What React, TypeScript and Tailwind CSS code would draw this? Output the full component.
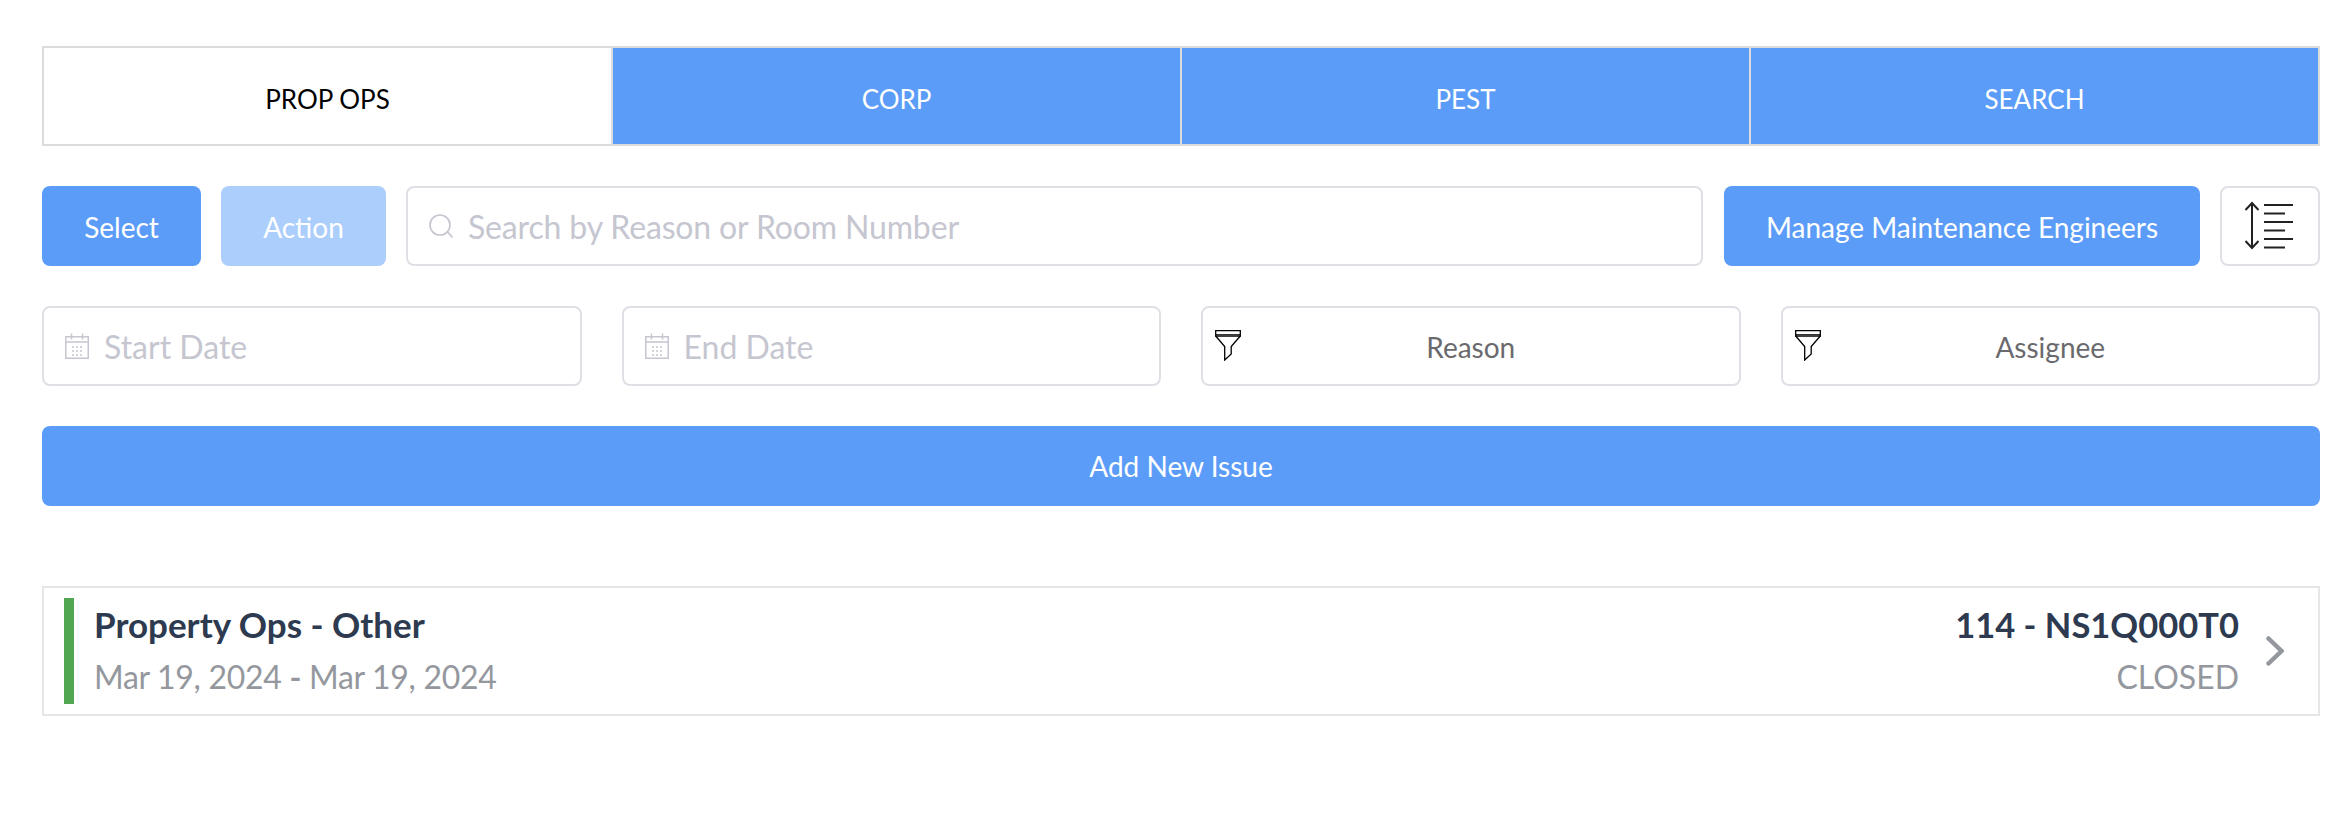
import React from "react";

const CalendarIcon = () => (
  <svg width="24" height="26" viewBox="0 0 24 26" fill="none" stroke="#c5c6d0" strokeWidth="1.5" className="shrink-0">
    <rect x="0.75" y="3.75" width="22.5" height="21.5" />
    <path d="M0.75 9h22.5M6.5 0.5v6M17.5 0.5v6" />
    <path d="M7 14h2M11 14h2M15 14h2M7 18h2M11 18h2M15 18h2M7 22h2M11 22h2M15 22h2" strokeWidth="1.6" />
  </svg>
);

const FilterIcon = () => (
  <svg width="26" height="31" viewBox="0 0 26 31" fill="none" stroke="#000" strokeWidth="1.3" className="shrink-0">
    <path d="M0.7 0.7h24.6v5.3H0.7z" />
    <path d="M0.7 6l9 10.500V30l6.500-6v-7.500L25.300 6" />
    <path d="M1 4.500h24" strokeWidth="0.8" />
  </svg>
);

const SearchIcon = () => (
  <svg width="26" height="24" viewBox="0 0 26 24" fill="none" stroke="#c5c6d0" strokeWidth="1.7" className="shrink-0">
    <circle cx="12" cy="11" r="10" />
    <path d="M19.5 18l5 5.3" />
  </svg>
);

const LineHeightIcon = () => (
  <svg width="44" height="48" viewBox="0 0 44 48" fill="none" stroke="#222" strokeWidth="2" className="overflow-visible">
    <path d="M4 1v45M-2.500 8L4 1l6.500 7M-2.500 39L4 46l6.500-7" />
    <path d="M16 3h29M16 11.500h21M16 20h29M16 28.500h21M16 37h29M16 45.500h21" />
  </svg>
);

const tabs = ["PROP OPS", "CORP", "PEST", "SEARCH"];

export default function App() {
  return (
    <div className="min-h-[814px] bg-white pt-[46px] pl-[42px] pr-[24px] font-['Lato',sans-serif] text-[28px]">
      <div className="flex h-[100px] border-2 border-[#dcdcdc] bg-[#5b9cf8]">
        {tabs.map((t, i) => (
          <div
            key={t}
            className={`flex flex-1 items-center justify-center pt-[6px] text-[26px] ${i > 0 ? "border-l-2 border-[#dcdcdc] text-white" : "bg-white text-black"}`}
          >
            {t}
          </div>
        ))}
      </div>

      <div className="mt-[40px] flex h-[80px] gap-[20px]">
        <button className="w-[159px] rounded-[8px] bg-[#5b9cf8] pt-[1px] text-white">Select</button>
        <button className="w-[165px] rounded-[8px] bg-[#abcefc] pt-[1px] text-white">Action</button>
        <div className="mr-[1px] flex flex-1 items-center gap-[14px] rounded-[8px] border-2 border-[#dfdfe6] bg-white pl-[20px]">
          <SearchIcon />
          <span className="pt-[1px] text-[32px] tracking-[-0.15px] text-[#c5c6d0]">Search by Reason or Room Number</span>
        </div>
        <button className="w-[476px] rounded-[8px] bg-[#5b9cf8] pt-[1px] text-white">Manage Maintenance Engineers</button>
        <button className="flex w-[100px] items-center justify-center rounded-[8px] border-2 border-[#dfdfe6] bg-white">
          <LineHeightIcon />
        </button>
      </div>

      <div className="mt-[40px] grid h-[80px] grid-cols-4 gap-[40px]">
        {["Start Date", "End Date"].map((t) => (
          <div key={t} className="flex items-center gap-[15px] rounded-[8px] border-2 border-[#dfdfe6] bg-white pl-[21px]">
            <CalendarIcon />
            <span className="pt-[1px] text-[32px] text-[#c5c6d0]">{t}</span>
          </div>
        ))}
        {["Reason", "Assignee"].map((t) => (
          <div key={t} className="relative flex items-center justify-center rounded-[8px] border-2 border-[#dfdfe6] bg-white pt-[1px] text-[#6a6a6e]">
            <span className="absolute left-[12px] top-[22px]">
              <FilterIcon />
            </span>
            {t}
          </div>
        ))}
      </div>

      <button className="mt-[40px] block h-[80px] w-full rounded-[8px] bg-[#5b9cf8] text-white">Add New Issue</button>

      <div className="mt-[80px] flex h-[130px] items-center border-2 border-[#e6e6e6] bg-white pl-[20px]">
        <div className="h-[106px] w-[10px] bg-[#52a852]" />
        <div className="ml-[20px] flex flex-1 flex-col">
          <span className="-mt-[1px] text-[35px] font-bold leading-[44px] text-[#2d3a4f]">Property Ops - Other</span>
          <span className="mt-[9px] text-[32px] leading-[44px] tracking-[-0.3px] text-[#94989e]">
            Mar 19, 2024 <span className="font-bold">-</span> Mar 19, 2024
          </span>
        </div>
        <div className="flex flex-col items-end">
          <span className="text-[34.5px] font-bold leading-[44px] text-[#2d3a4f]">114 - NS1Q000T0</span>
          <span className="mt-[8px] text-[32px] leading-[44px] text-[#94989e]">CLOSED</span>
        </div>
        <svg width="18" height="30" viewBox="0 0 18 30" fill="none" stroke="#94989e" strokeWidth="4.500" strokeLinecap="round" className="ml-[27px] mr-[34px] shrink-0">
          <path d="M2.500 2.500L15.500 15L2.500 27.500" />
        </svg>
      </div>
    </div>
  );
}
